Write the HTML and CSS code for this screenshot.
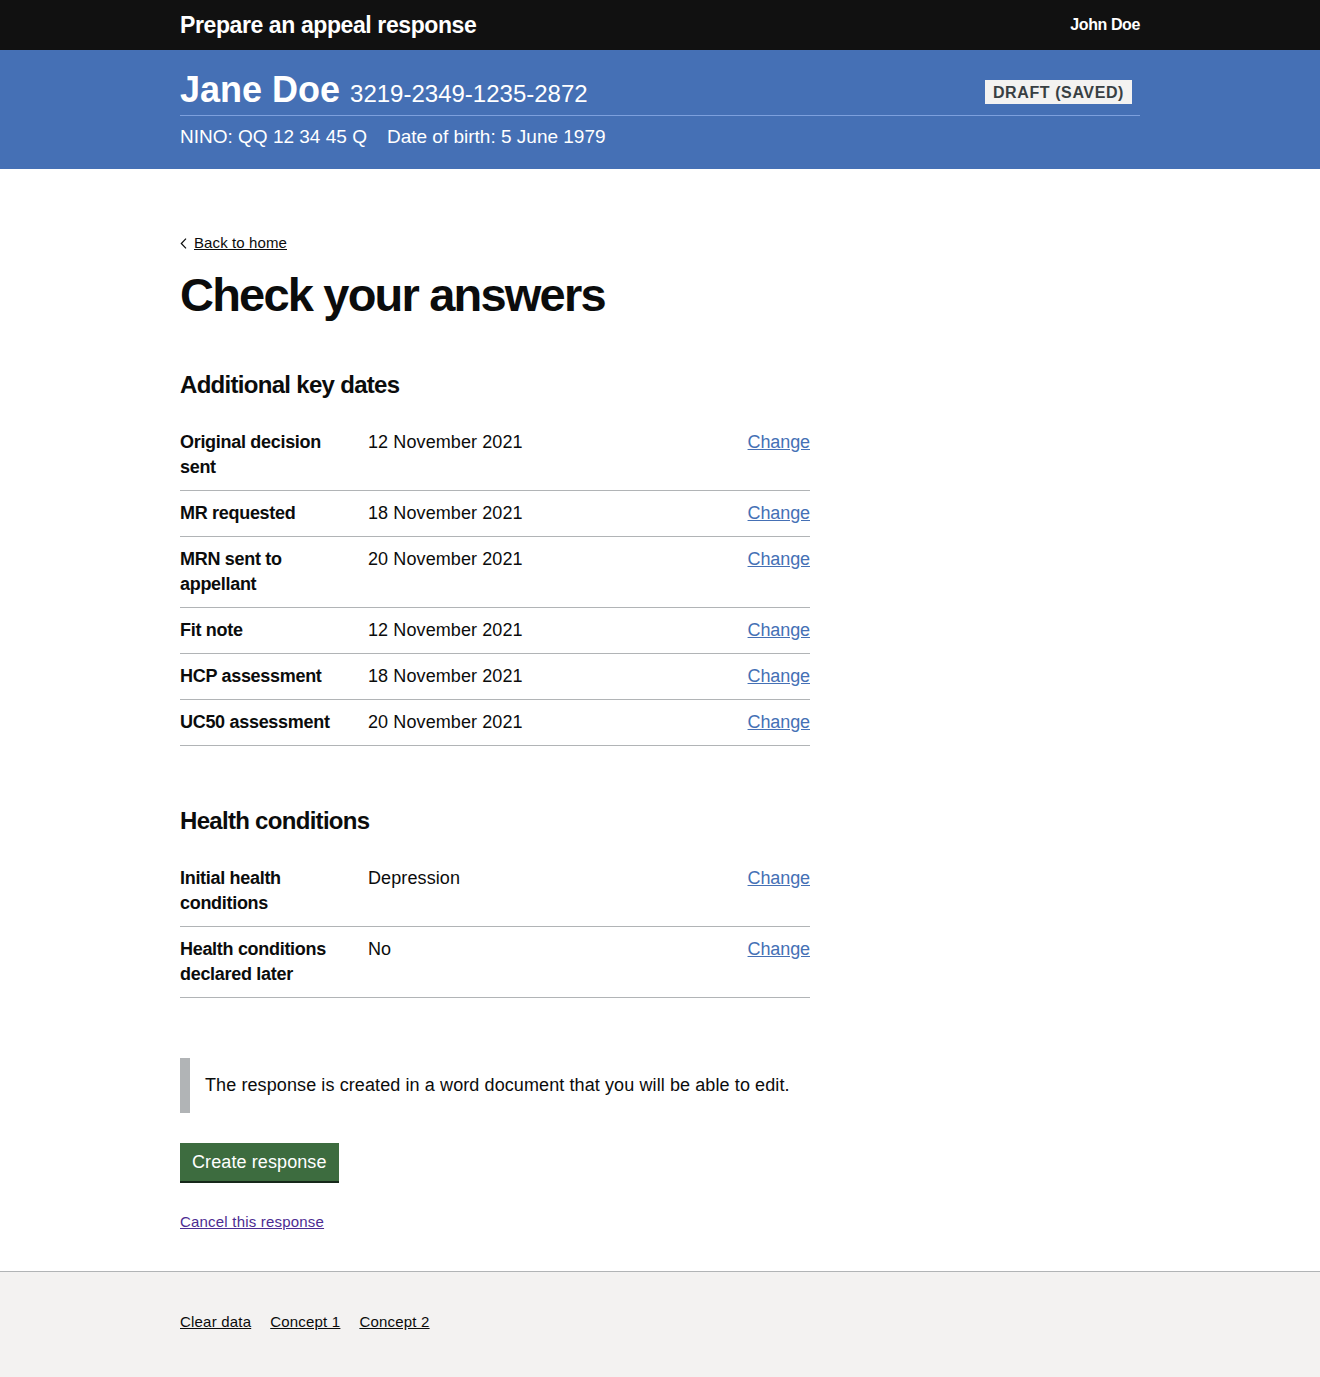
FILE: index.html
```html
<!DOCTYPE html>
<html lang="en">
<head>
<meta charset="utf-8">
<title>Check your answers</title>
<link rel="stylesheet" href="styles.css">
</head>
<body>
<header class="topbar">
  <div class="container topbar-inner">
    <span class="service-name">Prepare an appeal response</span>
    <span class="user-name">John Doe</span>
  </div>
</header>
<section class="case-banner">
  <div class="container">
    <div class="case-title-row">
      <h2 class="case-title">Jane Doe <span class="case-ref">3219-2349-1235-2872</span></h2>
      <strong class="tag">Draft (saved)</strong>
    </div>
    <p class="case-meta"><span>NINO: QQ 12 34 45 Q</span><span>Date of birth: 5 June 1979</span></p>
  </div>
</section>

<main class="container main">
  <a class="back-link" href="#"><svg class="chev" width="7" height="11" viewBox="0 0 7 11"><path d="M6 0.7 1.3 5.5 6 10.3" fill="none" stroke="#0b0c0c" stroke-width="1.2"/></svg><span>Back to home</span></a>
  <h1 class="heading-xl">Check your answers</h1>

  <h2 class="heading-m">Additional key dates</h2>
  <dl class="summary">
    <div class="row"><dt>Original decision sent</dt><dd class="val">12 November 2021</dd><dd class="act"><a href="#">Change</a></dd></div>
    <div class="row"><dt>MR requested</dt><dd class="val">18 November 2021</dd><dd class="act"><a href="#">Change</a></dd></div>
    <div class="row"><dt>MRN sent to appellant</dt><dd class="val">20 November 2021</dd><dd class="act"><a href="#">Change</a></dd></div>
    <div class="row"><dt>Fit note</dt><dd class="val">12 November 2021</dd><dd class="act"><a href="#">Change</a></dd></div>
    <div class="row"><dt>HCP assessment</dt><dd class="val">18 November 2021</dd><dd class="act"><a href="#">Change</a></dd></div>
    <div class="row"><dt>UC50 assessment</dt><dd class="val">20 November 2021</dd><dd class="act"><a href="#">Change</a></dd></div>
  </dl>

  <h2 class="heading-m">Health conditions</h2>
  <dl class="summary">
    <div class="row"><dt>Initial health conditions</dt><dd class="val">Depression</dd><dd class="act"><a href="#">Change</a></dd></div>
    <div class="row"><dt>Health conditions declared later</dt><dd class="val">No</dd><dd class="act"><a href="#">Change</a></dd></div>
  </dl>

  <div class="inset">The response is created in a word document that you will be able to edit.</div>

  <button class="button" type="button">Create response</button>

  <p class="cancel"><a href="#">Cancel this response</a></p>
</main>

<footer class="footer">
  <div class="container footer-links">
    <a href="#">Clear data</a>
    <a href="#">Concept 1</a>
    <a href="#">Concept 2</a>
  </div>
</footer>
</body>
</html>
```

FILE: styles.css
```css
* { box-sizing: border-box; }
html, body { margin: 0; padding: 0; }
body {
  font-family: "Liberation Sans", Arial, sans-serif;
  color: #0b0c0c;
  background: #fff;
}
.container {
  width: 960px;
  margin: 0 auto;
}
.topbar {
  background: #111111;
  height: 50px;
}
.topbar-inner {
  display: flex;
  justify-content: space-between;
  align-items: center;
  height: 50px;
  color: #fff;
}
.service-name {
  font-size: 23px;
  font-weight: 700;
  letter-spacing: -0.4px;
}
.user-name {
  font-size: 16px;
  font-weight: 700;
  letter-spacing: -0.4px;
}
.case-banner {
  background: #4570b5;
  color: #fff;
  height: 119px;
  padding-top: 20px;
}
.case-title-row {
  display: flex;
  justify-content: space-between;
  align-items: flex-start;
  border-bottom: 1px solid #7da0dd;
  height: 46px;
}
.case-title {
  margin: 0;
  font-size: 36px;
  line-height: 40px;
  font-weight: 700;
}
.case-ref {
  font-size: 24px;
  font-weight: 400;
}
.tag {
  margin-top: 10px;
  margin-right: 8px;
  background: #f3f2f1;
  color: #383f43;
  font-size: 16px;
  font-weight: 700;
  text-transform: uppercase;
  letter-spacing: 0.6px;
  padding: 2px 8px 1px;
  line-height: 21px;
}
.case-meta {
  margin: 9px 0 0;
  font-size: 19px;
  line-height: 24px;
  display: flex;
  gap: 20px;
}
.main {
  padding-top: 64px;
  padding-bottom: 39px;
}
.back-link {
  display: inline-flex;
  align-items: center;
  gap: 7px;
  font-size: 15px;
  color: #0b0c0c;
  line-height: 20px;
}
.back-link span { text-decoration: underline; letter-spacing: 0.1px; }
.chev { flex: none; }
.heading-xl {
  margin: 17px 0 50px;
  font-size: 47px;
  line-height: 50px;
  font-weight: 700;
  letter-spacing: -1.8px;
}
.heading-m {
  margin: 0 0 20px;
  font-size: 24px;
  line-height: 30px;
  font-weight: 700;
  letter-spacing: -0.7px;
}
.summary {
  width: 630px;
  margin: 0 0 60px;
  font-size: 18px;
  line-height: 25px;
}
.row {
  display: flex;
  border-bottom: 1px solid #b1b4b6;
  padding: 10px 0 10px;
}
.row dt {
  width: 188px;
  font-weight: 700;
  padding-right: 20px;
  letter-spacing: -0.3px;
}
.row dd { margin: 0; }
.val { flex: 1; letter-spacing: 0.1px; }
.act { text-align: right; }
.act a { color: #4570b5; letter-spacing: -0.1px; }
.inset {
  border-left: 10px solid #b1b4b6;
  padding: 15px 0 15px 15px;
  font-size: 18px;
  line-height: 25px;
  margin: 0 0 30px;
  letter-spacing: 0.1px;
}
.button {
  display: block;
  font-family: inherit;
  background: #3d6c3f;
  color: #fff;
  border: 0;
  box-shadow: 0 2px 0 #16281a;
  font-size: 18px;
  line-height: 19px;
  padding: 10px 12px 9px;
  letter-spacing: 0.1px;
  cursor: pointer;
  margin-bottom: 31px;
}
.cancel {
  margin: 0;
  font-size: 15px;
  line-height: 20px;
}
.cancel a { color: #4c2c92; letter-spacing: 0.2px; }
.footer {
  background: #f3f2f1;
  border-top: 1px solid #b1b4b6;
  height: 106px;
  padding-top: 40px;
}
.footer-links {
  display: flex;
  gap: 19px;
  font-size: 15px;
  line-height: 20px;
}
.footer-links a { color: #0b0c0c; letter-spacing: 0.2px; }
```
